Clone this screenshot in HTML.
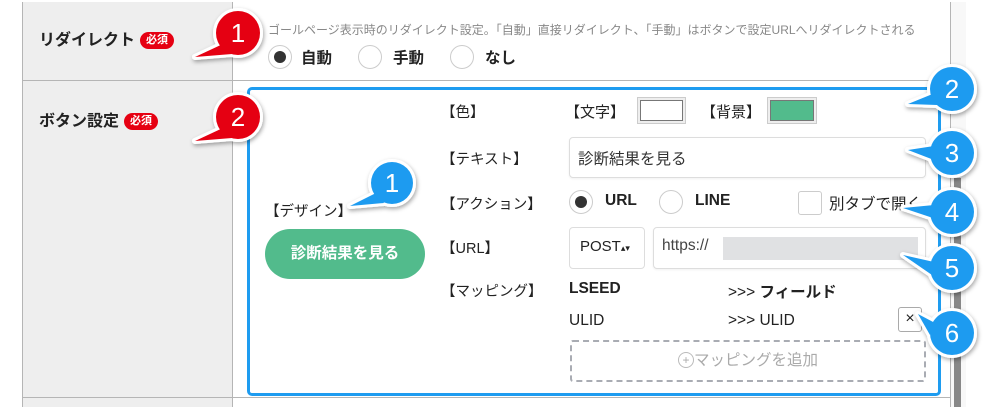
<!DOCTYPE html>
<html><head><meta charset="utf-8">
<style>
*{margin:0;padding:0;box-sizing:border-box}
body{width:988px;height:407px;background:#fff;position:relative;overflow:hidden;font-family:"Liberation Sans","Noto Sans CJK JP",sans-serif;color:#222}
.a{position:absolute;white-space:nowrap}
.lbl{font-size:16px;font-weight:bold;color:#222}
.req{display:inline-block;background:#e60012;color:#fff;font-size:11px;font-weight:bold;border-radius:9px;padding:1px 6px;line-height:15px;vertical-align:2px;margin-left:5px}
.t{font-size:14.5px;color:#222}
.b{font-size:15.5px;font-weight:bold;color:#222}
.radio{position:absolute;width:24px;height:24px;border:1px solid #ccc;border-radius:50%;background:#fff}
.radio.on::after{content:"";position:absolute;left:5px;top:5px;width:12px;height:12px;border-radius:50%;background:#333}
.inp{position:absolute;border:1px solid #ddd;border-radius:4px;background:#fff;box-shadow:0 1px 2px rgba(0,0,0,.06)}
</style></head><body>
<div class="a" style="left:22px;top:2px;width:211px;height:405px;background:#eeeeee;border-left:1px solid #b5b5b5;border-right:1px solid #b5b5b5"></div>
<div class="a" style="left:22px;top:80px;width:928px;height:1px;background:#b5b5b5"></div>
<div class="a" style="left:22px;top:397px;width:928px;height:1px;background:#b5b5b5"></div>
<div class="a" style="left:950px;top:2px;width:1px;height:405px;background:#b5b5b5"></div>
<div class="a" style="left:951px;top:2px;width:15px;height:405px;background:#f8f8f8"></div>
<div class="a" style="left:954px;top:178px;width:7px;height:229px;background:#888"></div>

<div class="a lbl" style="left:39px;top:26px">リダイレクト<span class="req">必須</span></div>
<div class="a lbl" style="left:39px;top:107px">ボタン設定<span class="req">必須</span></div>

<div class="a" style="left:268px;top:21px;font-size:12px;color:#888">ゴールページ表示時のリダイレクト設定。「自動」直接リダイレクト、「手動」はボタンで設定URLへリダイレクトされる</div>
<div class="radio on" style="left:268px;top:45px"></div><div class="a b" style="left:301px;top:46px">自動</div>
<div class="radio" style="left:358px;top:45px"></div><div class="a b" style="left:393px;top:46px">手動</div>
<div class="radio" style="left:450px;top:45px"></div><div class="a b" style="left:485px;top:46px">なし</div>

<div class="a" style="left:247px;top:87px;width:694px;height:309px;border:3px solid #1e9cf0;border-radius:5px"></div>

<div class="a t" style="left:265px;top:200px">【デザイン】</div>
<div class="a" style="left:265px;top:229px;width:160px;height:50px;border-radius:25px;background:#52bb8c;color:#fff;font-weight:bold;font-size:15.5px;line-height:50px;text-align:center">診断結果を見る</div>

<div class="a t" style="left:441px;top:101px">【色】</div>
<div class="a t" style="left:565px;top:101px;font-size:15px">【文字】</div>
<div class="a" style="left:637px;top:97px;width:49px;height:27px;background:#eee;border:1px solid #ccc"></div>
<div class="a" style="left:640px;top:100px;width:43px;height:21px;background:#fff;border:1px solid #777"></div>
<div class="a t" style="left:701px;top:101px;font-size:15px">【背景】</div>
<div class="a" style="left:767px;top:97px;width:50px;height:27px;background:#eee;border:1px solid #ccc"></div>
<div class="a" style="left:770px;top:100px;width:44px;height:21px;background:#52bb8c;border:1px solid #777"></div>

<div class="a t" style="left:441px;top:148px">【テキスト】</div>
<div class="inp" style="left:569px;top:137px;width:357px;height:41px"></div>
<div class="a" style="left:578px;top:147px;font-size:15.5px;color:#333">診断結果を見る</div>

<div class="a t" style="left:441px;top:193px">【アクション】</div>
<div class="radio on" style="left:569px;top:190px"></div><div class="a b" style="left:605px;top:192px">URL</div>
<div class="radio" style="left:659px;top:190px"></div><div class="a b" style="left:695px;top:192px">LINE</div>
<div class="a" style="left:798px;top:191px;width:24px;height:24px;border:1px solid #ccc;border-radius:3px"></div>
<div class="a t" style="left:829px;top:192px;font-size:15.5px">別タブで開く</div>

<div class="a t" style="left:441px;top:237px">【URL】</div>
<div class="inp" style="left:569px;top:227px;width:76px;height:42px;box-shadow:none"></div>
<div class="a" style="left:580px;top:238px;font-size:15px;color:#222">POST<span style="font-size:9px">▴▾</span></div>
<div class="inp" style="left:653px;top:227px;width:273px;height:42px"></div>
<div class="a" style="left:662px;top:237px;font-size:15.5px;color:#444">https://</div>
<div class="a" style="left:723px;top:237px;width:195px;height:23px;background:#e0e1e3"></div>

<div class="a t" style="left:441px;top:280px">【マッピング】</div>
<div class="a b" style="left:569px;top:280px">LSEED</div>
<div class="a t" style="left:728px;top:280px;font-size:15.5px">&gt;&gt;&gt; <b>フィールド</b></div>
<div class="a t" style="left:569px;top:312px;font-size:15.5px">ULID</div>
<div class="a t" style="left:728px;top:312px;font-size:15.5px">&gt;&gt;&gt; ULID</div>
<div class="a" style="left:898px;top:307px;width:24px;height:25px;border:1px solid #aaa;border-radius:3px;font-size:16px;line-height:22px;text-align:center">×</div>
<div class="a" style="left:570px;top:340px;width:356px;height:42px;border:2px dashed #a9acb3;border-radius:3px;text-align:center;line-height:38px;font-size:15.5px;color:#aaa"><span style="display:inline-block;width:16px;height:16px;border:1px solid #bbb;border-radius:50%;font-size:12px;line-height:14px;vertical-align:1px">+</span>マッピングを追加</div>

<svg class="a" style="left:0;top:0" width="988" height="407" viewBox="0 0 988 407">
<defs><filter id="s" x="-50%" y="-50%" width="200%" height="200%"><feDropShadow dx="1" dy="2" stdDeviation="2" flood-opacity="0.35"/></filter></defs>
<g font-family="Liberation Sans, sans-serif" font-size="26" text-anchor="middle" fill="#fff">
<g filter="url(#s)">
<g stroke="#fff" stroke-width="6" stroke-linejoin="round">
<polygon points="195,57 225,43 232,54" fill="#fff"/><circle cx="238" cy="33" r="22" fill="#fff"/>
<polygon points="195,141 225,127 232,138" fill="#fff"/><circle cx="238" cy="117" r="22" fill="#fff"/>
<polygon points="350,206 378,192 384,203" fill="#fff"/><circle cx="392" cy="183" r="21" fill="#fff"/>
<polygon points="908,104 935,93 937,105" fill="#fff"/><circle cx="952" cy="89" r="22" fill="#fff"/>
<polygon points="908,150 934,146 934,160" fill="#fff"/><circle cx="952" cy="153" r="22" fill="#fff"/>
<polygon points="903,208 934,205 936,219" fill="#fff"/><circle cx="952" cy="212" r="22" fill="#fff"/>
<polygon points="903,255 934,262 932,275" fill="#fff"/><circle cx="952" cy="268" r="22" fill="#fff"/>
<polygon points="918,314 935,323 930,335" fill="#fff"/><circle cx="952" cy="333" r="22" fill="#fff"/>
</g></g>
<polygon points="195,57 225,43 232,54" fill="#e50012"/><circle cx="238" cy="33" r="22" fill="#e50012"/>
<polygon points="195,141 225,127 232,138" fill="#e50012"/><circle cx="238" cy="117" r="22" fill="#e50012"/>
<g fill="#1d9bf0">
<polygon points="350,206 378,192 384,203"/><circle cx="392" cy="183" r="21"/>
<polygon points="908,104 935,93 937,105"/><circle cx="952" cy="89" r="22"/>
<polygon points="908,150 934,146 934,160"/><circle cx="952" cy="153" r="22"/>
<polygon points="903,208 934,205 936,219"/><circle cx="952" cy="212" r="22"/>
<polygon points="903,255 934,262 932,275"/><circle cx="952" cy="268" r="22"/>
<polygon points="918,314 935,323 930,335"/><circle cx="952" cy="333" r="22"/>
</g>
<text x="238" y="42">1</text><text x="238" y="126">2</text><text x="392" y="192">1</text>
<text x="952" y="98">2</text><text x="952" y="162">3</text><text x="952" y="221">4</text>
<text x="952" y="277">5</text><text x="952" y="342">6</text>
</g>
</svg>
</body></html>
